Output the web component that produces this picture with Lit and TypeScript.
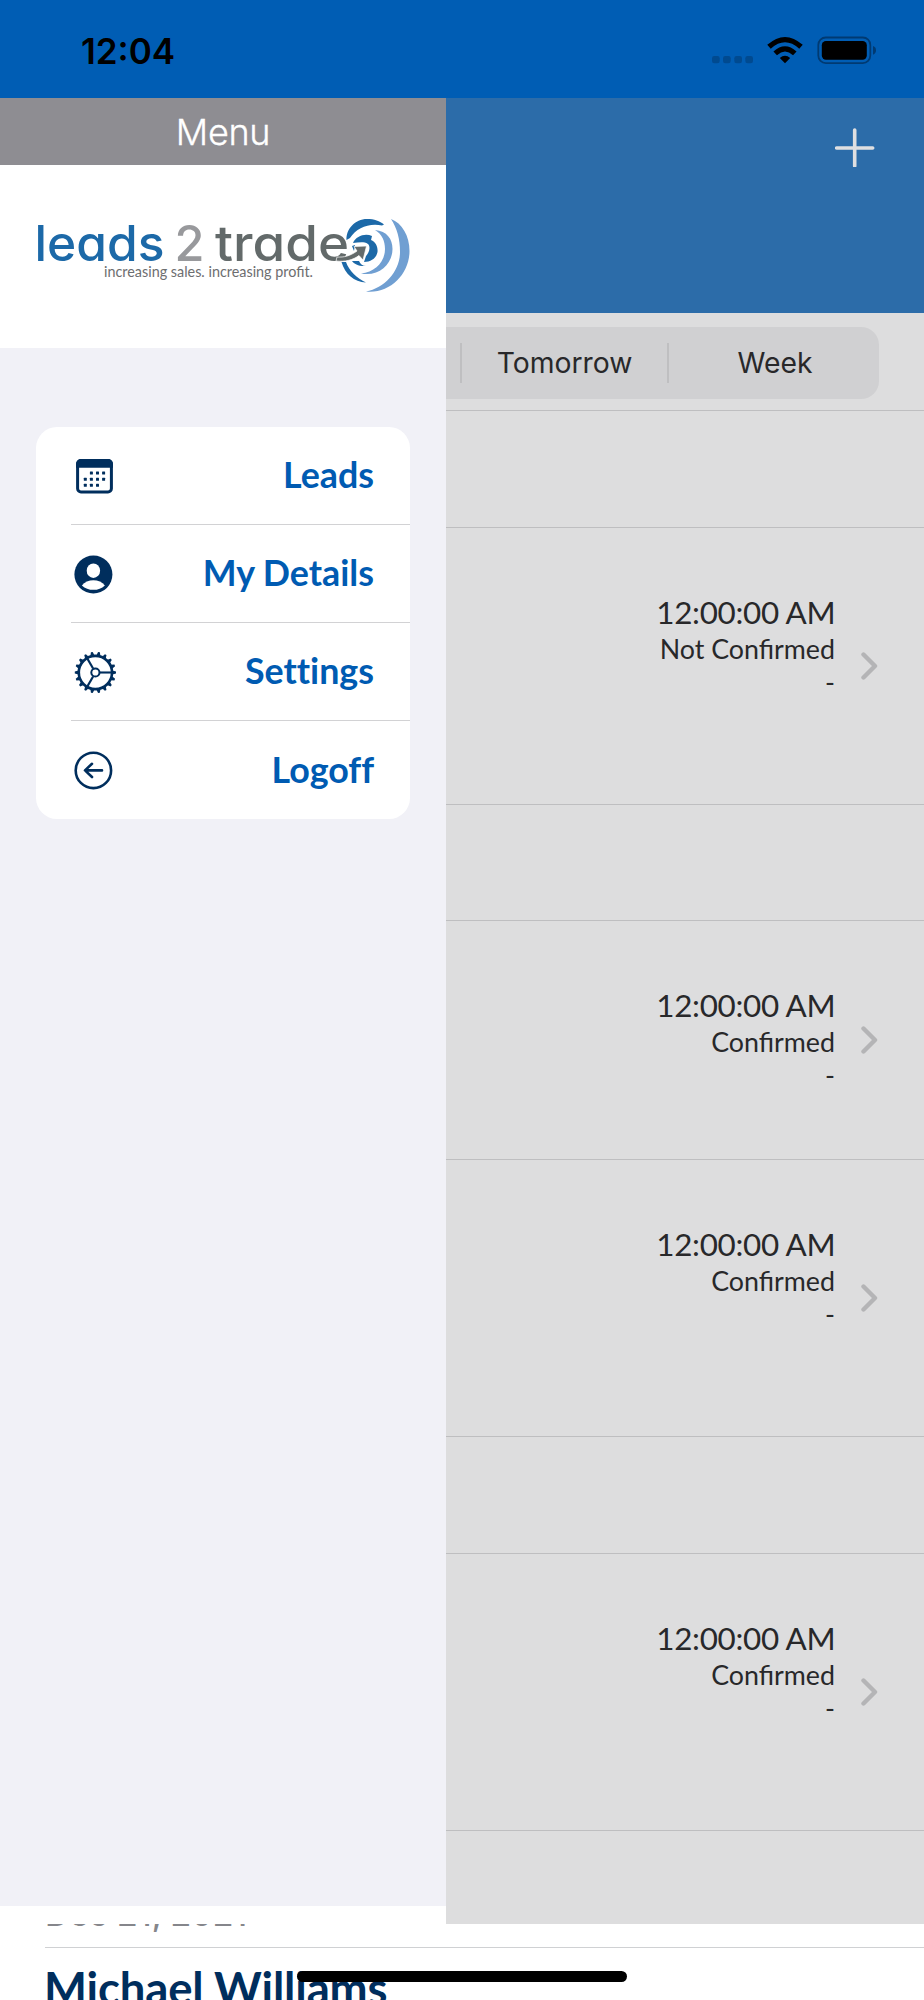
import { LitElement, html, svg, css } from "lit";
import { customElement } from "lit/decorators.js";

const NAVY = "#002e5d";

const calendarIcon = html`<svg width="46" height="46" viewBox="0 0 46 46">
  <rect x="5.6" y="7.6" width="33.8" height="31.3" rx="3.4" fill="#fff" stroke=${NAVY} stroke-width="3"/>
  <path d="M4 14.8V11a5 5 0 0 1 5-5h27a5 5 0 0 1 5 5v3.8z" fill=${NAVY}/>
  ${[[19.4, 20], [25.5, 20], [31.6, 20], [13.3, 26.2], [19.4, 26.2], [25.5, 26.2], [31.6, 26.2], [13.3, 32.3], [19.4, 32.3], [25.5, 32.3]].map(
    ([x, y]) => svg`<rect x=${x - 1.5} y=${y - 1.5} width="3" height="3" rx="0.5" fill=${NAVY}/>`
  )}
</svg>`;

const personIcon = html`<svg width="46" height="46" viewBox="0 0 46 46">
  <circle cx="21.4" cy="23.5" r="19" fill=${NAVY}/>
  <ellipse cx="21.4" cy="19.7" rx="6.7" ry="7.3" fill="#fff"/>
  <path d="M9.9 34.4C12.4 31 17 29.2 21.4 29.2S30.4 31 32.9 34.4C29.8 37.4 25.8 38.8 21.4 38.8S13 37.4 9.9 34.4z" fill="#fff"/>
</svg>`;

const gearIcon = html`<svg width="46" height="46" viewBox="0 0 46 46">
  <g transform="translate(23.4 23.5)" fill="none" stroke=${NAVY} stroke-width="2.1">
    <circle r="16.6" stroke-width="2.6"/>
    <circle r="4.1" stroke-width="2"/>
    ${[0, 120, 240].map((a) => svg`<path transform="rotate(${a})" d="M4.6 0H16"/>`)}
    ${Array.from({ length: 18 }, (_, i) => svg`<path transform="rotate(${i * 20})" d="M17 -2.1L20.6 -0.9V0.9L17 2.1z" fill=${NAVY} stroke="none"/>`)}
  </g>
</svg>`;

const logoffIcon = html`<svg width="46" height="46" viewBox="0 0 46 46">
  <g fill="none" stroke=${NAVY} stroke-width="2.6" stroke-linecap="round" stroke-linejoin="round">
    <circle cx="21.4" cy="23.4" r="17.7"/>
    <path d="M30 23.4H13.2M20 16.8L13 23.4L20 30"/>
  </g>
</svg>`;

const menu = [
  { icon: calendarIcon, label: "Leads" },
  { icon: personIcon, label: "My Details" },
  { icon: gearIcon, label: "Settings" },
  { icon: logoffIcon, label: "Logoff" },
];

const logo = html`<svg class="logo" viewBox="0 0 446 183">
  <g class="word">
    <text x="34.5" y="96" textLength="130" lengthAdjust="spacingAndGlyphs" fill="#1c69a8">leads</text>
    <text x="174.5" y="96" textLength="30" lengthAdjust="spacingAndGlyphs" fill="#98999c">2</text>
    <text x="215" y="96" textLength="134" lengthAdjust="spacingAndGlyphs" fill="#636a6a">trade</text>
  </g>
  <text class="tag" x="104" y="112" textLength="209" lengthAdjust="spacingAndGlyphs">increasing sales. increasing profit.</text>
  <path d="M346.5 75C346 64 355 54 367 54C374 54 380 56 384 59.5L382 60.5C368 58 357 63 350 73z" fill="#1c69a8"/>
  <path d="M341.5 97L346 97C349 106 357 113 366 117.5C354 117 345 109 341.5 97z" fill="#1c69a8"/>
  <path d="M375 65C387 66 392.500 74 392.500 84C392.500 99 379 112 361 108.500C375 107 385 97 385 84C385 76 382 69 375 65z" fill="#709fd2"/>
  <path d="M391 54C402 58 409.500 71 409.500 86C409.500 109 390 129 366 126.500C385 123 400 106 400 87C400 74 397 63 391 54z" fill="#709fd2"/>
  <path d="M353 78C356 71 365 68 372 71L371 75C376 77 378 82 377.500 87C376.500 93 371 97 364 97L366 91C369 88 371 82 368 79C363 76 358 78 353 78z" fill="#1c69a8"/>
  <path d="M352 96L359 96C360 99 363 101 366 101C359 101.500 354 99 352 96zM352 81L355 80L354 86z" fill="#1c69a8"/>
  <path d="M336 96C345 97 353 95 359 90.500L363 95L366.500 81L354 81.500L357 86C350 91 344 92.500 337 92z" fill="#636a6a" stroke="#fff" stroke-width="0.7"/>
</svg>`;

@customElement("side-menu")
class SideMenu extends LitElement {
  static styles = css`
    :host { display: flex; flex-direction: column; width: 446px; height: 1808px; background: #f1f1f7; }
    .title { height: 67px; background: #8e8d92; color: #fff; text-align: center; font: 300 36px/69px Inter, sans-serif; letter-spacing: -0.3px; -webkit-text-stroke: 0.3px #fff; }
    .brand { height: 183px; background: #fff; }
    .logo { display: block; width: 446px; height: 183px; }
    .word { font: 500 49px Inter, sans-serif; font-feature-settings: "cv11"; }
    .tag { font: 400 15px Lato, sans-serif; fill: #6d6e70; }
    .card { margin: 79px 36px 0 36px; padding-left: 35px; background: #fff; border-radius: 21px; }
    .row { box-sizing: border-box; height: 98px; padding-right: 36px; display: flex; align-items: center; justify-content: space-between; border-bottom: 1px solid #d2d2d4; color: #005bb2; font: 700 35.8px/44px Lato, sans-serif; font-variant-ligatures: none; }
    .row svg { margin-left: 1px; }
    .row span { margin-top: -1px; }
    .row:last-child { border-bottom: 0; }
  `;
  render() {
    return html`
      <div class="title">Menu</div>
      <div class="brand">${logo}</div>
      <div class="card">${menu.map((m) => html`<div class="row">${m.icon}<span>${m.label}</span></div>`)}</div>
    `;
  }
}

type Entry = { gap: number } | { status: string; height: number };
const entries: Entry[] = [
  { gap: 117 },
  { status: "Not Confirmed", height: 277 },
  { gap: 116 },
  { status: "Confirmed", height: 239 },
  { status: "Confirmed", height: 277 },
  { gap: 117 },
  { status: "Confirmed", height: 277 },
];

@customElement("lead-list")
class LeadList extends LitElement {
  static styles = css`
    :host { display: block; flex: 1; height: 1826px; background: #ddddde; overflow: hidden; color: #28282a; }
    .head { box-sizing: border-box; height: 215px; background: #2c6ca9; padding: 30px 49px; display: flex; justify-content: flex-end; }
    .tabs { box-sizing: border-box; height: 98px; padding: 14px 45px 11px 0; border-bottom: 1px solid #bebec0; }
    .seg { height: 72px; background: #d0d0d2; border-radius: 0 18px 18px 0; display: flex; align-items: center; font: 400 28.3px/74px Inter, sans-serif; }
    .lead { width: 14px; }
    .bar { width: 2px; height: 40px; background: #bfbfc1; }
    .tab { width: 205px; text-align: center; }
    .tab:last-child { flex: 1; padding-left: 2px; }
    .gap, .item { box-sizing: border-box; border-bottom: 1px solid #bebec0; }
    .item { padding: 0 46px 0 0; display: flex; justify-content: flex-end; align-items: center; gap: 25px; font: 400 26.8px/33px Lato, sans-serif; text-align: right; }
    .info { align-self: flex-start; padding-top: 64px; }
    .time { font-size: 31.4px; line-height: 41px; letter-spacing: -0.3px; margin-right: -0.3px; }
    .dash { line-height: 32px; }
    svg { display: block; margin-top: -1px; }
  `;
  render() {
    return html`
      <div class="head"><svg width="40" height="40" viewBox="0 -1 40 40"><path d="M19.7 2V38M1.7 20H37.7" stroke="#dfdfe1" stroke-width="3.6" stroke-linecap="round"/></svg></div>
      <div class="tabs"><div class="seg"><div class="lead"></div><div class="bar"></div><div class="tab">Tomorrow</div><div class="bar"></div><div class="tab">Week</div></div></div>
      ${entries.map((e) =>
        "gap" in e
          ? html`<div class="gap" style="height:${e.gap}px"></div>`
          : html`<div class="item" style="height:${e.height}px">
              <div class="info"><div class="time">12:00:00 AM</div><div>${e.status}</div><div class="dash">-</div></div>
              <svg width="18" height="28" viewBox="0 0 18 28"><path d="M3.5 2.5L15 14L3.5 25.5" fill="none" stroke="#b4b4b6" stroke-width="4.4" stroke-linecap="round" stroke-linejoin="round"/></svg>
            </div>`
      )}
    `;
  }
}

@customElement("app-root")
class AppRoot extends LitElement {
  static styles = css`
    :host { display: block; position: relative; width: 924px; height: 2000px; overflow: hidden; background: #fff; }
    .status { box-sizing: border-box; height: 98px; padding: 0 48px 0 81px; background: #005db4; display: flex; align-items: center; justify-content: space-between; }
    .clock { font: 600 35px/44px Inter, sans-serif; color: #000; padding-top: 3px; }
    .main { display: flex; align-items: flex-start; height: 1826px; }
    .under { height: 76px; overflow: hidden; padding-left: 45px; }
    .date { height: 23px; overflow: hidden; border-bottom: 1px solid #d0d1d3; }
    .date span { display: block; margin-top: -32px; font: 500 33.5px/44px Inter, sans-serif; color: #85868b; }
    .name { white-space: nowrap; font: 700 45.5px/56px Lato, sans-serif; letter-spacing: -0.15px; color: #002e5d; padding-top: 12px; margin-left: -1px; }
    .home { position: absolute; left: 297px; top: 1971px; width: 330px; height: 11px; border-radius: 6px; background: #000; }
  `;
  render() {
    return html`
      <div class="status">
        <div class="clock">12:04</div>
        <svg width="166" height="40" viewBox="710 29 166 40">
          ${[712, 723, 734.3, 745.3].map((x) => svg`<rect x=${x} y="56" width="7.7" height="7.2" rx="2.2" fill="#004a90"/>`)}
          <path d="M785 63.3L779.8 58.1Q785 53.5 790.2 58.1z"/>
          <g fill="none" stroke="#000" stroke-width="5.2"><path d="M775.2 53.4Q785 44.4 794.8 53.4"/><path d="M769 46.8Q785 32.4 801 46.8"/></g>
          <rect x="818.3" y="37.5" width="52" height="25.6" rx="7.5" fill="none" stroke="#003a72" stroke-width="1.8"/>
          <rect x="821.8" y="41" width="45" height="18.8" rx="4.2"/>
          <path d="M873 46Q876 47 876 50.3T873 54.8z" fill="#003a72"/>
        </svg>
      </div>
      <div class="main"><side-menu></side-menu><lead-list></lead-list></div>
      <div class="under">
        <div class="date"><span>Dec 21, 2021</span></div>
        <div class="name">Michael Williams</div>
      </div>
      <div class="home"></div>
    `;
  }
}
